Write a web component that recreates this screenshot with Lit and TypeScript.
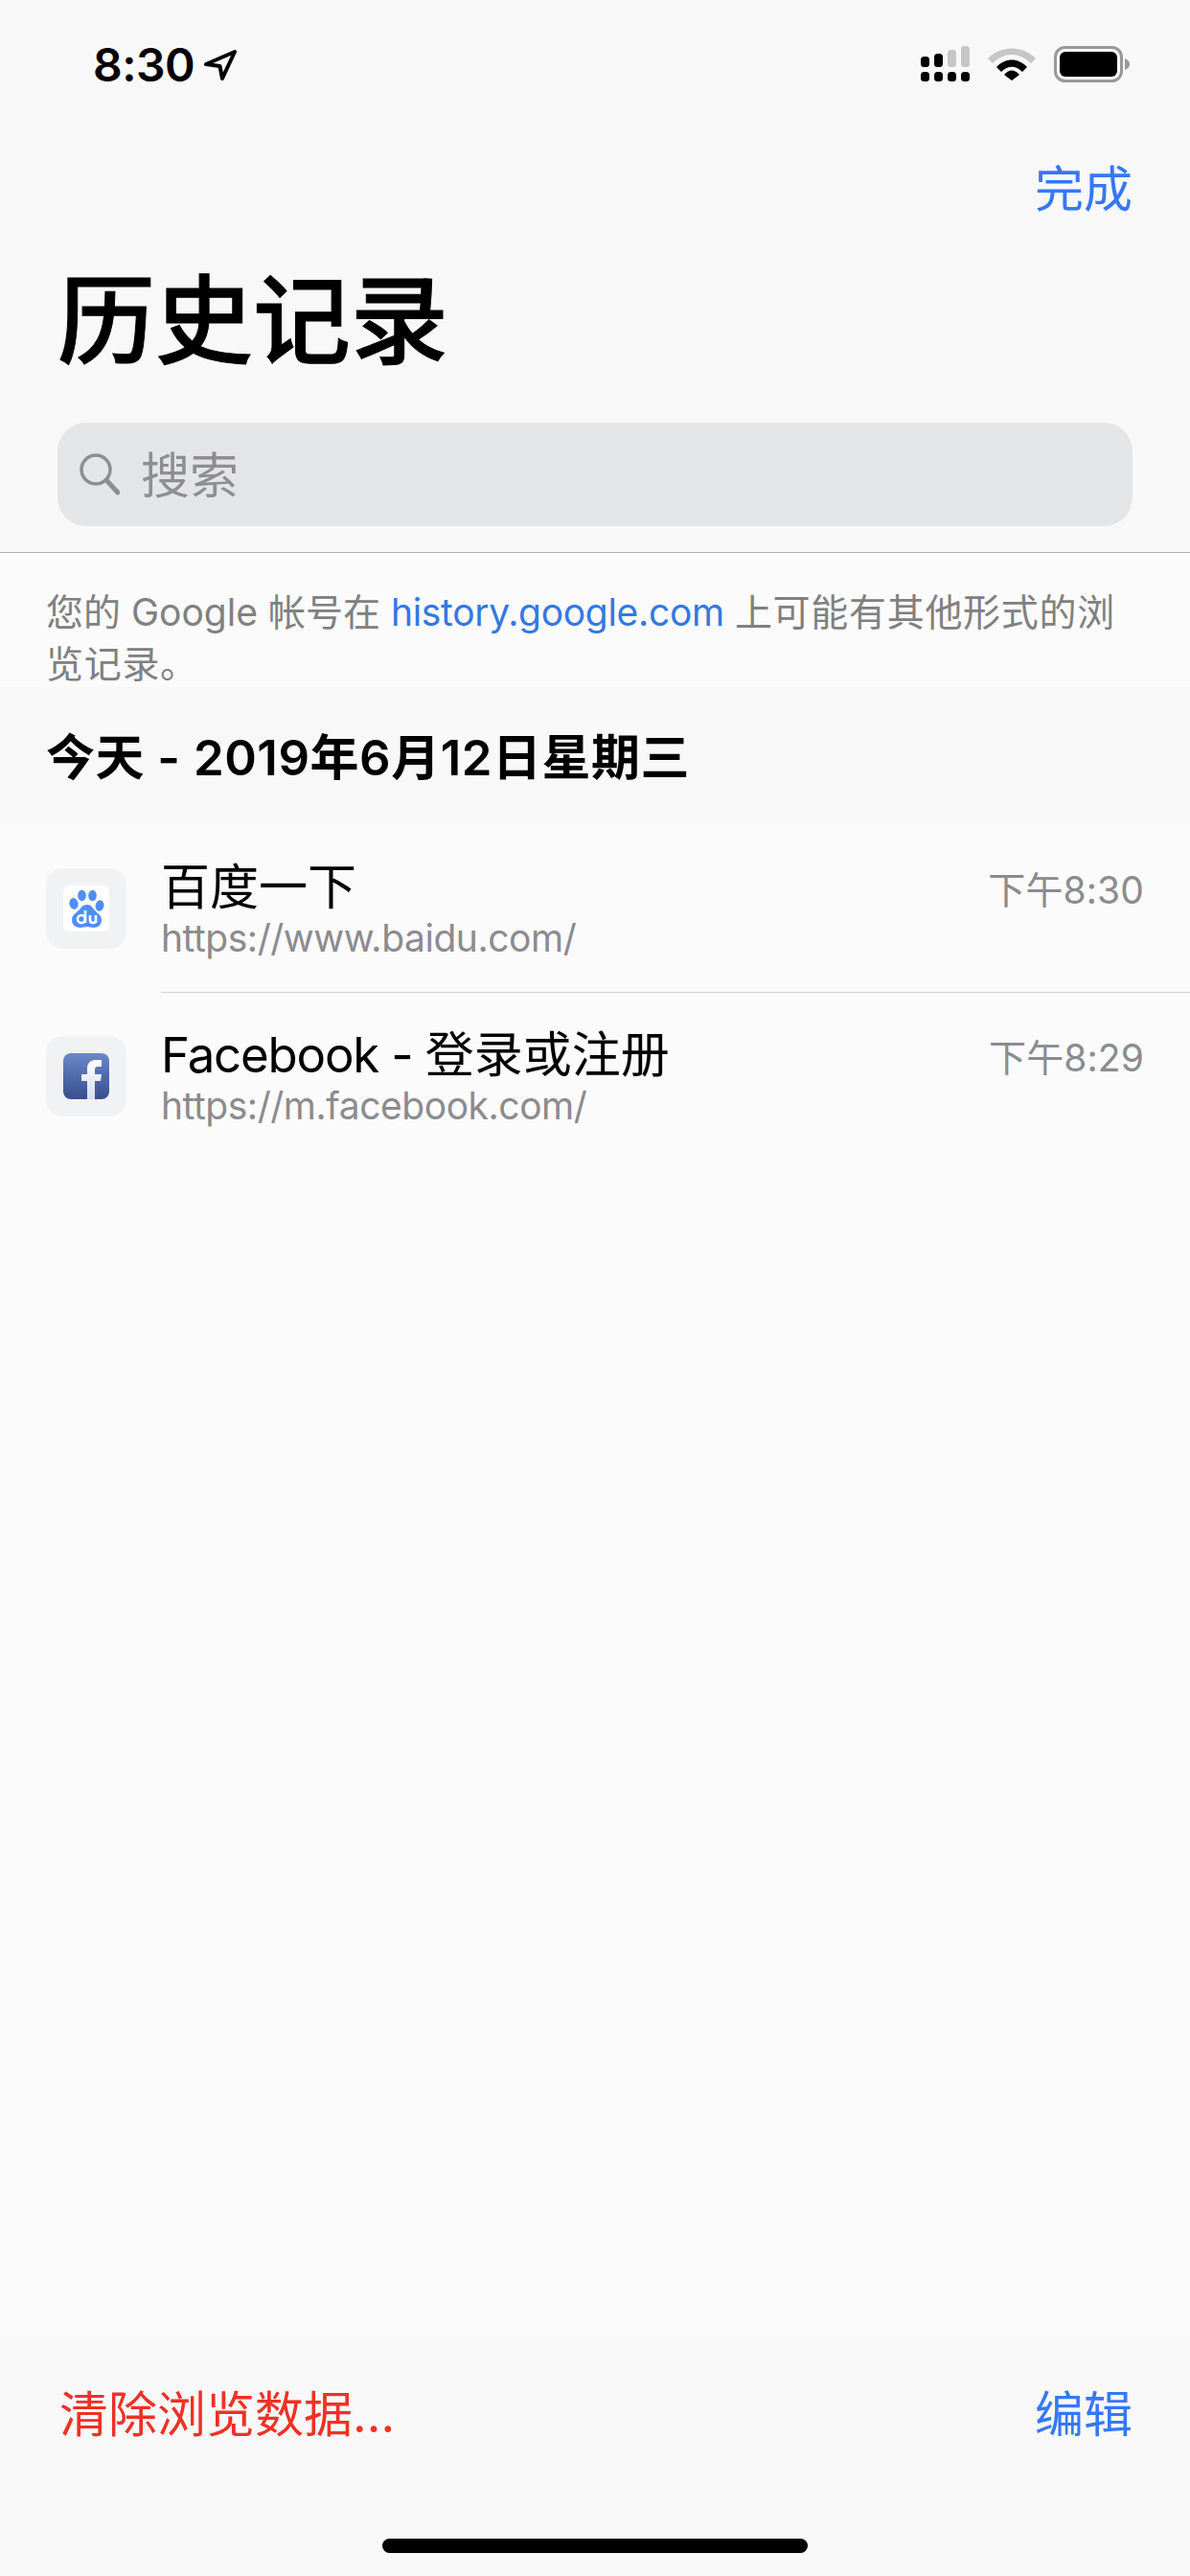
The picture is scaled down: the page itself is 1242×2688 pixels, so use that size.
import { LitElement, html, css, svg } from "lit";
import { customElement } from "lit/decorators.js";

const baidu = svg`<svg class="fav" viewBox="0 0 48 48"><rect width="48" height="48" rx="6" fill="#fff"/>
<g fill="#4f8ef7"><ellipse cx="11" cy="19" rx="4.6" ry="6" transform="rotate(-12 11 19)"/><ellipse cx="19.5" cy="10.5" rx="4.3" ry="5.8"/><ellipse cx="30.5" cy="10.5" rx="4.3" ry="5.8"/><ellipse cx="38" cy="21" rx="4.4" ry="5.8" transform="rotate(10 38 21)"/>
<path d="M25 20c4 0 5.5 3 8 6s7 5 7 10c0 5-4 8-8 8-3 0-5-1-7-1s-4 1-7 1c-5 0-9-3-9-8 0-5 4-7 7-10s4-6 9-6z"/></g>
<g fill="none" stroke="#fff" stroke-width="2.6"><circle cx="19" cy="35" r="4"/><path d="M23 26v13M28 31v5c0 4 6 4 6 0v-5M34 31v8"/></g></svg>`;

const facebook = svg`<svg class="fav" viewBox="0 0 48 48"><defs><linearGradient id="fb" x1="0" y1="0" x2="0" y2="1"><stop offset="0" stop-color="#6b88c8"/><stop offset="1" stop-color="#374f8c"/></linearGradient>
<linearGradient id="ff" x1="0" y1="0" x2="0" y2="1"><stop offset="0" stop-color="#fff"/><stop offset="1" stop-color="#d5dcec"/></linearGradient></defs>
<rect width="48" height="48" rx="8" fill="url(#fb)"/>
<path fill="url(#ff)" d="M25 48V29h-6v-7h6v-6c0-6 4-9 9-9h6v7h-4c-2 0-3 1-3 3v5h7l-1 7h-6v19z"/></svg>`;

@customElement("app-root")
export class AppRoot extends LitElement {
  static styles = css`
    :host { display: block; }
    * { box-sizing: border-box; }
    .screen { width: 1242px; height: 2688px; display: flex; flex-direction: column; background: #fbfbfb; font-family: Inter, "Noto Sans CJK SC", sans-serif; color: #000; position: relative; }
    .top { background: #f8f8f8; height: 577px; border-bottom: 1px solid #b4b4b4; flex: none; }
    .status { height: 132px; display: flex; justify-content: space-between; padding: 44px 63px 0 97px; }
    .time-wrap { display: flex; align-items: flex-start; gap: 10px; height: 48px; }
    .time { font-size: 48px; font-weight: 600; line-height: 48px; letter-spacing: -0.5px; }
    .arrow { width: 34px; height: 34px; margin-top: 7px; }
    .sys { display: flex; gap: 19px; align-items: flex-start; margin-top: 4px; }
    .nav { height: 132px; display: flex; justify-content: flex-end; align-items: center; padding: 0 60px 0 0; color: #3478f6; font-size: 51px; line-height: 66px; }
    h1 { margin: 0; font-size: 102px; line-height: 132px; font-weight: 500; -webkit-text-stroke: 1px #000; padding: 5px 0 0 60px; height: 132px; }
    .search { margin: 45px 60px 0; height: 108px; background: #e4e5e7; border-radius: 30px; display: flex; align-items: center; padding-left: 23px; gap: 22px; color: #8e8e92; font-size: 51px; }
    .search span { margin-top: -5px; }
    .note { margin: 0; padding: 35px 48px 0; height: 140px; font-size: 39px; line-height: 54px; color: #808080; flex: none; }
    .note .link { color: #3478e0; letter-spacing: -0.3px; }
    .note .tail { letter-spacing: 0.7px; }
    .section { height: 143px; flex: none; background: #f8f8f8; display: flex; align-items: center; padding: 0 48px 3px; font-size: 51px; font-weight: 600; letter-spacing: 0.5px; }
    .row { height: 175px; position: relative; display: flex; padding: 46px 48px 0 48px; flex: none; }
    .tile { width: 84px; height: 84px; border-radius: 18px; background: #f1f2f4; display: flex; align-items: center; justify-content: center; flex: none; }
    .fav { width: 48px; height: 48px; display: block; }
    .body { margin-left: 36px; flex: 1; margin-top: -13px; }
    .title { font-size: 51px; line-height: 66px; }
    .lat { letter-spacing: -1.2px; }
    .url { font-size: 39px; line-height: 42px; color: #8b8b8f; margin-top: -1px; letter-spacing: -0.45px; }
    .when { font-size: 39px; line-height: 48px; color: #8b8b8f; margin-top: -1px; letter-spacing: 0.1px; }
    .row + .row::before { content: ""; position: absolute; left: 168px; right: 0; top: 0; height: 1px; background: #d2d2d4; }
    .spacer { flex: 1; }
    .bottom { height: 250px; flex: none; background: #f8f8f8; display: flex; justify-content: space-between; align-items: flex-start; padding: 49px 60px 0 62px; font-size: 51px; line-height: 66px; }
    .red { color: #ee3124; }
    .blue { color: #3478f6; }
    .home { position: absolute; left: 399px; top: 2649px; width: 444px; height: 15px; border-radius: 8px; background: #000; }
  `;

  render() {
    return html`<div class="screen">
      <div class="top">
        <div class="status">
          <div class="time-wrap"><span class="time">8:30</span>
            <svg class="arrow" viewBox="0 0 34 34"><path d="M2 16 L32 3 L19 31 L16.5 18 Z" fill="none" stroke="#000" stroke-width="4" stroke-linejoin="round"/></svg>
          </div>
          <div class="sys">
            <svg width="51" height="38" viewBox="0 0 51 38"><g fill="#000"><rect x="0" y="11" width="9" height="11" rx="3.5"/><rect x="14" y="8" width="9" height="14" rx="3.5"/></g><g fill="#c6c6c6"><rect x="28" y="4" width="9" height="18" rx="3.5"/><rect x="42" y="0" width="9" height="22" rx="3.5"/></g><g fill="#000"><rect x="0" y="27" width="9" height="10" rx="3.5"/><rect x="14" y="27" width="9" height="10" rx="3.5"/><rect x="28" y="27" width="9" height="10" rx="3.5"/><rect x="42" y="27" width="9" height="10" rx="3.5"/></g></svg>
            <svg width="50" height="36" viewBox="0 0 50 36"><path d="M0 13 C14 -1 36 -1 50 13 L45 18 C32 6 18 6 5 18 Z" fill="#c6c6c6"/><path d="M9 22 C18 12 32 12 41 22 L36 27 C29 20 21 20 14 27 Z M17 30 C22 24 28 24 33 30 L25 36 Z" fill="#000"/></svg>
            <svg width="79" height="38" viewBox="0 0 79 38"><rect x="1.5" y="1.5" width="69" height="35" rx="10" fill="none" stroke="#999" stroke-width="3"/><rect x="6" y="6" width="60" height="26" rx="6" fill="#000"/><path d="M74 13c3 1 5 3 5 6s-2 5-5 6z" fill="#999"/></svg>
          </div>
        </div>
        <div class="nav"><span>完成</span></div>
        <h1>历史记录</h1>
        <div class="search">
          <svg width="42" height="44" viewBox="0 0 42 44"><circle cx="17" cy="17" r="15" fill="none" stroke="#8e8e92" stroke-width="3.5"/><path d="M28 28 L40 41" stroke="#8e8e92" stroke-width="5" stroke-linecap="round"/></svg>
          <span>搜索</span>
        </div>
      </div>
      <p class="note">您的 Google 帐号在 <span class="link">history.google.com</span> <span class="tail">上可能有其他形式的浏览记录。</span></p>
      <div class="section">今天 - 2019年6月12日星期三</div>
      <div class="row"><div class="tile">${baidu}</div><div class="body"><div class="title">百度一下</div><div class="url">https://www.baidu.com/</div></div><div class="when">下午8:30</div></div>
      <div class="row"><div class="tile">${facebook}</div><div class="body"><div class="title"><span class="lat">Facebook - </span>登录或注册</div><div class="url">https://m.facebook.com/</div></div><div class="when">下午8:29</div></div>
      <div class="spacer"></div>
      <div class="bottom"><span class="red">清除浏览数据...</span><span class="blue">编辑</span></div>
      <div class="home"></div>
    </div>`;
  }
}
